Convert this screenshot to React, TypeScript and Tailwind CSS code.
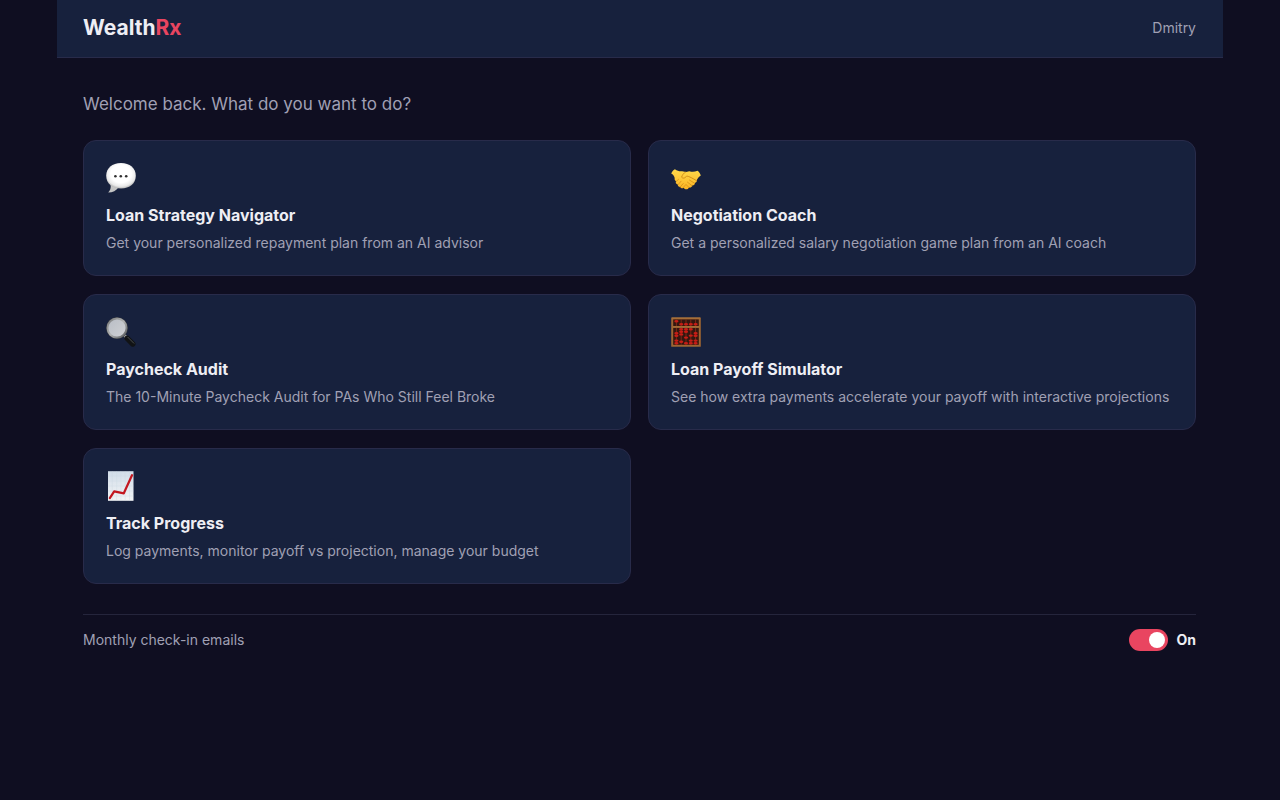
import React, { useState } from 'react';

function SpeechIcon() {
  return (
    <svg viewBox="0 0 30 30" className="block h-[30px] w-[30px]" aria-hidden="true">
      <defs>
        <radialGradient id="bubble" cx="0.5" cy="0.42" r="0.58">
          <stop offset="0.6" stopColor="#ffffff" />
          <stop offset="0.85" stopColor="#e9e9e9" />
          <stop offset="1" stopColor="#b4b4b4" />
        </radialGradient>
      </defs>
      <path d="M4.6 21.5C5.2 25 4 27.7 2.2 29.6C6.8 29.4 10.4 27.4 12.4 24.4Z" fill="#c4c4c4" />
      <path
        d="M15 0C23.8 0 29.8 5.2 29.8 12.8C29.8 20.4 23.8 25.6 15 25.6C6.2 25.6 0.2 20.4 0.2 12.8C0.2 5.2 6.2 0 15 0Z"
        fill="url(#bubble)"
      />
      <circle cx="9.4" cy="13.2" r="1.3" fill="#303030" />
      <circle cx="14.8" cy="13.2" r="1.3" fill="#303030" />
      <circle cx="20.2" cy="13.2" r="1.3" fill="#303030" />
    </svg>
  );
}

function HandshakeIcon() {
  return (
    <svg viewBox="0 0 30 30" className="block h-[30px] w-[30px]" aria-hidden="true">
      <defs>
        <linearGradient id="skin" x1="0" y1="0" x2="0" y2="1">
          <stop offset="0" stopColor="#ffd94a" />
          <stop offset="1" stopColor="#fbb424" />
        </linearGradient>
      </defs>
      <path
        d="M0.2 10.6C1 8.6 2.2 7.1 3.9 6.2C6.6 8 8.7 8.6 11.1 8.2L15 9L18.3 8.2C21.4 9.2 23.4 9 26.6 7.8C28.3 9.1 29.3 10.6 29.8 12.6C27.8 14 26.8 15.2 25.8 17C26.1 18.4 25.4 19.6 24 19.8C24 21.5 22.9 22.5 21.2 22.4C20.8 24.1 19.6 24.8 18 24.4C17 26.4 15.3 26.8 13.8 25.9L12.6 24.8C11.5 25.7 9.8 25.4 9.2 24C7.6 24 6.6 22.9 6.8 21.5C5.1 21.2 4.3 19.8 5 18.3C3.7 17.2 3.4 16.2 3.7 14.9C3.1 13 2 11.6 0.2 10.6Z"
        fill="url(#skin)"
      />
      <path
        d="M14.6 9C12.5 10.2 11.3 12 10.6 14.2C12.1 15.9 14.3 15 15.7 13C18.2 13.3 21.6 15.4 25.5 17.6"
        fill="none"
        stroke="#c98212"
        strokeWidth="0.8"
        strokeLinecap="round"
        strokeLinejoin="round"
      />
      <path
        d="M18.5 17.1L23.6 20.2M16.4 19.1L21 22.7M14.7 21.2L18 24.5M5.3 18.4L7.5 16.4M7.1 21.6L10.1 18.2M9.3 23.9L12.3 20.5M12.2 24.6L14.2 22.3"
        fill="none"
        stroke="#d18a14"
        strokeWidth="0.7"
        strokeLinecap="round"
      />
    </svg>
  );
}

function MagnifierIcon() {
  return (
    <svg viewBox="0 0 30 30" className="block h-[30px] w-[30px]" aria-hidden="true">
      <defs>
        <linearGradient id="rim" x1="0" y1="0" x2="1" y2="1">
          <stop offset="0" stopColor="#77797a" />
          <stop offset="0.5" stopColor="#b2b3b3" />
          <stop offset="1" stopColor="#515457" />
        </linearGradient>
        <linearGradient id="lens" x1="0" y1="0" x2="1" y2="1">
          <stop offset="0" stopColor="#b8bdc4" />
          <stop offset="1" stopColor="#d0d1d5" />
        </linearGradient>
      </defs>
      <path d="M18 18L21.5 21.3" stroke="#9a9c9d" strokeWidth="3" />
      <path d="M21.2 21.3L26.8 27" stroke="#111315" strokeWidth="5.4" strokeLinecap="round" />
      <path d="M21.8 20.2L27.8 26.2" stroke="#4f5254" strokeWidth="0.9" strokeLinecap="round" />
      <circle cx="11" cy="11" r="10.8" fill="#3a3c40" />
      <circle cx="11" cy="11" r="9.5" fill="url(#lens)" stroke="url(#rim)" strokeWidth="1.9" />
    </svg>
  );
}

// bead heights on each rod, top deck first
const rods = [
  { x: 5.4, beads: [4.2, 16.2, 18.8, 23.6, 26.2] },
  { x: 10.2, beads: [7.2, 12.2, 14.8, 17.4, 24.8] },
  { x: 15, beads: [7.2, 12.2, 14.8, 20.6, 26.2] },
  { x: 19.8, beads: [7.2, 12.2, 18.6, 23.6, 26.2] },
  { x: 24.6, beads: [7.2, 16.2, 18.8, 23.6, 26.2] },
];

function AbacusIcon() {
  return (
    <svg viewBox="0 0 30 30" className="block h-[30px] w-[30px]" aria-hidden="true">
      <rect x="0.2" y="0.4" width="29.6" height="29.4" rx="0.6" fill="#9d6532" />
      <rect x="2.2" y="2.4" width="25.6" height="6.6" fill="#34160f" />
      <rect x="2.2" y="10.7" width="25.6" height="17.1" fill="#34160f" />
      {rods.map(({ x, beads }) => (
        <g key={x}>
          <path d={`M${x} 2.4V9M${x} 10.7V27.8`} stroke="#8c301a" strokeWidth="0.8" />
          {beads.map((y) => (
            <ellipse key={y} cx={x} cy={y} rx="2.1" ry="1.2" fill="#c81d16" />
          ))}
        </g>
      ))}
      <path d="M0.6 0.9H29.4M2.2 10.2H27.8" stroke="#c18a49" strokeWidth="0.6" />
    </svg>
  );
}

function ChartIcon() {
  return (
    <svg viewBox="0 0 30 30" className="block h-[30px] w-[30px]" aria-hidden="true">
      <defs>
        <linearGradient id="sheet" x1="0" y1="0" x2="0" y2="1">
          <stop offset="0" stopColor="#d2dde9" />
          <stop offset="1" stopColor="#f2f4f6" />
        </linearGradient>
      </defs>
      <rect x="2" y="0.2" width="25.5" height="29.6" fill="url(#sheet)" />
      <path
        d="M6.3 0.2V29.8M10.6 0.2V29.8M14.9 0.2V29.8M19.2 0.2V29.8M23.5 0.2V29.8M2 5H27.5M2 10H27.5M2 15H27.5M2 20H27.5M2 25H27.5"
        stroke="#c8d5e1"
        strokeWidth="0.3"
      />
      <path
        d="M3.8 27.2L8.2 20.4L17.8 22.3L26 4.2"
        fill="none"
        stroke="#c31720"
        strokeWidth="2.2"
        strokeLinecap="round"
        strokeLinejoin="round"
      />
    </svg>
  );
}

const tools = [
  {
    title: 'Loan Strategy Navigator',
    description: 'Get your personalized repayment plan from an AI advisor',
    href: '#navigator',
    icon: SpeechIcon,
  },
  {
    title: 'Negotiation Coach',
    description: 'Get a personalized salary negotiation game plan from an AI coach',
    href: '#negotiation',
    icon: HandshakeIcon,
  },
  {
    title: 'Paycheck Audit',
    description: 'The 10-Minute Paycheck Audit for PAs Who Still Feel Broke',
    href: '#audit',
    icon: MagnifierIcon,
  },
  {
    title: 'Loan Payoff Simulator',
    description: 'See how extra payments accelerate your payoff with interactive projections',
    href: '#simulator',
    icon: AbacusIcon,
  },
  {
    title: 'Track Progress',
    description: 'Log payments, monitor payoff vs projection, manage your budget',
    href: '#progress',
    icon: ChartIcon,
  },
];

export default function App() {
  const [emailsOn, setEmailsOn] = useState(true);

  return (
    <div className="min-h-screen bg-[#0f0e21] font-['Inter',sans-serif] text-[#eeeef4]">
      <div className="mx-auto max-w-[1166px]">
        <header className="flex items-center justify-between border-b border-[#282b4a] bg-[#17213d] pt-3 pr-[27px] pb-[13px] pl-[26px]">
          <a href="#home" className="text-[21px] leading-8 font-bold">
            Wealth<span className="text-[#e94560]">Rx</span>
          </a>
          <span className="text-[14px] leading-6 text-[#a0a0b4]">Dmitry</span>
        </header>

        <main className="pt-[33px] pr-[27px] pb-10 pl-[26px]">
          <h1 className="mb-[23px] text-[17px] leading-[26px] text-[#a0a0b4]">
            Welcome back. What do you want to do?
          </h1>

          <div className="grid grid-cols-1 gap-x-[17px] gap-y-[18px] md:grid-cols-2">
            {tools.map(({ title, description, href, icon: Icon }) => (
              <a
                key={title}
                href={href}
                className="rounded-[13px] border border-[#282b4a] bg-[#17213d] px-[22px] pt-[22px] pb-[21px]"
              >
                <Icon />
                <h2 className="mt-[10px] text-[16px] leading-6 font-bold">{title}</h2>
                <p className="mt-[5px] text-[14px] leading-[22px] text-[#a0a0b4]">{description}</p>
              </a>
            ))}
          </div>

          <div className="mt-[30px] flex items-center justify-between border-t border-[#25253c] pt-[14px]">
            <label htmlFor="checkin-emails" className="text-[14px] leading-[22px] text-[#a0a0b4]">
              Monthly check-in emails
            </label>
            <div className="flex items-center gap-2">
              <input
                id="checkin-emails"
                type="checkbox"
                role="switch"
                checked={emailsOn}
                onChange={(e) => setEmailsOn(e.target.checked)}
                className="flex h-[22px] w-[39px] cursor-pointer appearance-none items-center rounded-full bg-[#3a3a55] px-[3px] before:block before:h-4 before:w-4 before:rounded-full before:bg-white checked:justify-end checked:bg-[#e94560]"
              />
              <span className="text-[14px] leading-[22px] font-bold">{emailsOn ? 'On' : 'Off'}</span>
            </div>
          </div>
        </main>
      </div>
    </div>
  );
}
